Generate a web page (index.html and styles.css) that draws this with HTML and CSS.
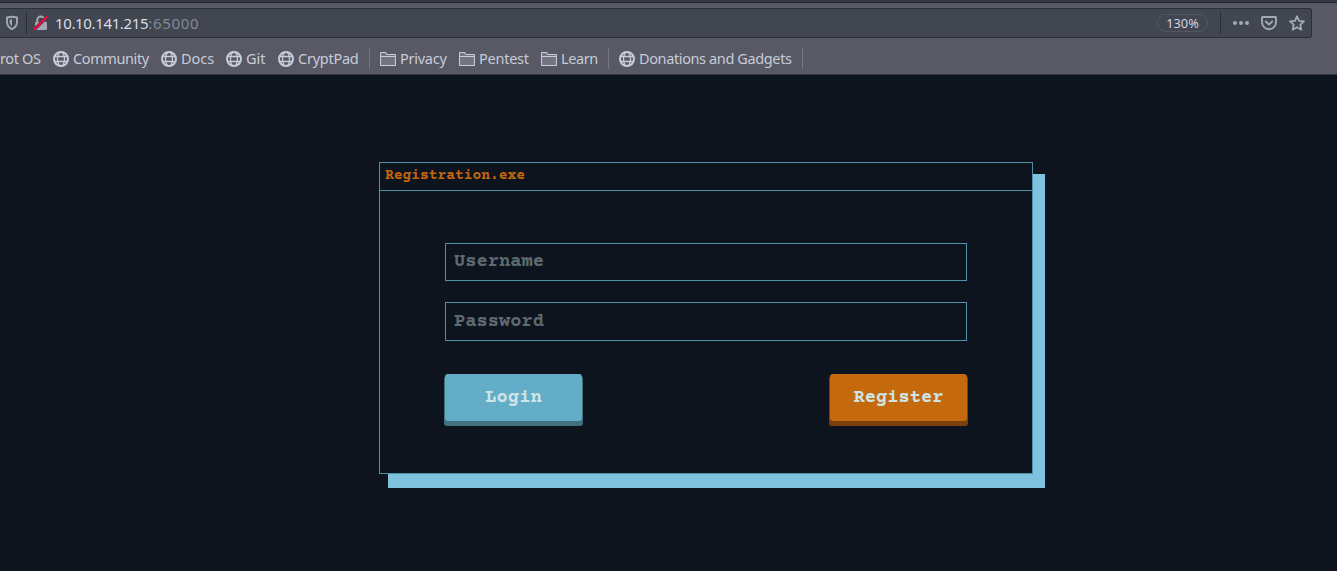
FILE: index.html
```
<!DOCTYPE html>
<html lang="en">
<head>
<meta charset="utf-8">
<title>Registration</title>
<link rel="stylesheet" href="styles.css">
</head>
<body>
<svg class="defs" aria-hidden="true">
  <symbol id="globe" viewBox="0 0 16 16"><g fill="none" stroke="currentColor"><circle cx="8" cy="8" r="7" stroke-width="2"/><ellipse cx="8" cy="8" rx="3.5" ry="7" stroke-width="1.3"/><path d="M2 5.500h12M2 10.500h12" stroke-width="1.300"/></g></symbol>
  <symbol id="folder" viewBox="0 0 16 16"><path d="M.5 14.500v-13h5l1.500 2h8.500v11z" fill="#737680"/><path d="M.5 14V2q0-.5.5-.5h4.500l1.500 2H15q.5 0 .5.500V14q0 .5-.5.500H1q-.5 0-.5-.500zM.5 5.500h15" fill="none" stroke="currentColor" stroke-width="1.100"/></symbol>
</svg>
<header class="browser">
  <div class="tabstrip"></div>
  <div class="urlbar">
    <svg class="shield" width="14" height="16" viewBox="0 0 14 16"><path d="M7 1.700c1.500 0 3.300.4 5 .8v4.300c0 3.400-2 6-5 7.300-3-1.300-5-3.900-5-7.300V2.500c1.700-.4 3.500-.8 5-.8z" fill="none" stroke="currentColor" stroke-width="1.900"/><path d="M7 4.300v6.900c-1.500-1-2.400-2.400-2.400-4.400V4.700z" fill="currentColor"/></svg>
    <span class="rule"></span>
    <svg class="lock" width="16" height="16" viewBox="0 0 16 16"><path d="M4.200 8V5.200a3.600 3.600 0 0 1 7.200 0V8" fill="none" stroke="currentColor" stroke-width="2"/><rect x="2" y="7" width="12" height="8" rx="1.300" fill="currentColor"/><path d="M1.300 14.500 13.800 2" stroke="#414651" stroke-width="3.200"/><path d="M1.300 14.200 13.800 1.700" stroke="#f5063c" stroke-width="2.200" stroke-linecap="round"/></svg>
    <span class="address">10.10.141.215<span class="port">:65000</span></span>
    <span class="zoom">130%</span>
    <span class="rule"></span>
    <svg class="dots" width="16" height="16" viewBox="0 0 16 16" fill="currentColor"><circle cx="2" cy="8" r="2"/><circle cx="8" cy="8" r="2"/><circle cx="14" cy="8" r="2"/></svg>
    <svg class="pocket" width="16" height="16" viewBox="0 0 16 16" fill="none" stroke="currentColor" stroke-linecap="round" stroke-linejoin="round" stroke-width="1.900"><path d="M1.800 2h12.400q.8 0 .8.800v4.400a7 7 0 0 1-14 0V2.800q0-.8.8-.8z"/><path d="M4.800 6.500 8 9.600l3.200-3.100"/></svg>
    <svg class="star" width="16" height="16" viewBox="0 0 16 16"><path d="m8 1.300 2 4.500 5 .5-3.700 3.400 1 5L8 12.200l-4.300 2.500 1-5L1 6.300l5-.5z" fill="none" stroke="currentColor" stroke-width="1.800" stroke-linejoin="round"/></svg>
  </div>
  <nav class="bookmarks">
    <a class="item parrot">rot OS</a>
    <a class="item community"><svg><use href="#globe"/></svg>Community</a>
    <a class="item docs"><svg><use href="#globe"/></svg>Docs</a>
    <a class="item git"><svg><use href="#globe"/></svg>Git</a>
    <a class="item cryptpad"><svg><use href="#globe"/></svg>CryptPad</a>
    <span class="divider"></span>
    <a class="item privacy"><svg><use href="#folder"/></svg>Privacy</a>
    <a class="item pentest"><svg><use href="#folder"/></svg>Pentest</a>
    <a class="item learn"><svg><use href="#folder"/></svg>Learn</a>
    <span class="divider"></span>
    <a class="item donations"><svg><use href="#globe"/></svg>Donations and Gadgets</a>
    <span class="divider"></span>
  </nav>
</header>
<main class="page">
  <section class="window">
    <h1 class="title">Registration.exe</h1>
    <form class="form">
      <input class="field" type="text" placeholder="Username">
      <input class="field password" type="password" placeholder="Password">
      <div class="actions">
        <button class="button login" type="button">Login</button>
        <button class="button register" type="button">Register</button>
      </div>
    </form>
  </section>
</main>
</body>
</html>
```
FILE: styles.css
```
* { box-sizing: border-box; }
body {
  margin: 0;
  height: 571px;
  overflow: hidden;
  background: #0d141e;
  font-family: "Noto Sans", sans-serif;
}
.defs { position: absolute; width: 0; height: 0; }
.browser {
  height: 75px;
  background: #585965;
  border-bottom: 1px solid #30343f;
  color: #c7ccd8;
  overflow: hidden;
}
.tabstrip { height: 3px; background: #353944; border-bottom: 1px solid #20242f; }
.urlbar {
  display: flex;
  align-items: center;
  width: 1312px;
  height: 30px;
  margin-top: 5px;
  padding: 0 6px 0 5px;
  background: #414651;
  border: 1px solid #292e39;
  border-left: 0;
  border-radius: 0 3px 3px 0;
  color: #a5a9b4;
}
.urlbar svg { flex: none; }
.rule { flex: none; width: 1px; height: 22px; background: #292e39; }
.shield + .rule { margin: 0 7px; }
.lock { margin-left: -1px; }
.address { margin-left: 6px; color: #d9deea; font-size: 15px; line-height: 20px; letter-spacing: -0.36px; }
.port { color: #858a96; letter-spacing: 0.7px; }
.zoom {
  width: 51px;
  height: 18px;
  margin: 0 12px 0 auto;
  border: 1px solid #535762;
  border-radius: 9px;
  color: #d0d5e1;
  font-size: 12.8px;
  line-height: 17px;
  text-align: center;
}
.dots, .pocket, .star { margin-left: 12px; }
.bookmarks { display: flex; align-items: center; height: 36px; padding-top: 5px; }
.item {
  display: flex;
  flex: none;
  align-items: center;
  gap: 4px;
  margin-top: -1px;
  font-size: 14.5px;
  line-height: 20px;
  white-space: nowrap;
}
.item svg { flex: none; width: 16px; height: 16px; margin-top: 1px; }
.parrot { width: 53px; letter-spacing: -0.35px; }
.community { width: 108px; letter-spacing: -0.4px; }
.docs { width: 65px; }
.git { width: 52px; }
.cryptpad { width: 91px; letter-spacing: -0.25px; }
.privacy { width: 79px; letter-spacing: -0.25px; }
.pentest { width: 82px; letter-spacing: -0.25px; }
.learn { width: 67px; letter-spacing: -0.4px; }
.donations { width: 183px; letter-spacing: -0.38px; }
.divider { flex: none; width: 1px; height: 21px; margin-right: 10px; background: #747782; }
.page { position: relative; z-index: 0; display: flex; padding: 87px 0 0 379px; }
.window {
  position: relative;
  width: 654px;
  height: 312px;
  border: 1px solid #4f91a8;
  background: #0d141e;
}
/* Offset slab behind the window */
.window::before {
  content: "";
  position: absolute;
  z-index: -1;
  left: 8px;
  top: 11px;
  width: 657px;
  height: 314px;
  background: #80c2de;
}
.title {
  height: 28px;
  margin: 0;
  padding-left: 5px;
  border-bottom: 1px solid #4f91a8;
  color: #c4660c;
  font: bold 14.6px/26px "Courier Prime", "Liberation Mono", monospace;
}
.form { display: flex; flex-direction: column; padding: 52px 65px 0; }
.field {
  width: 522px;
  height: 38px;
  padding: 0 8px 2px;
  border: 1px solid #4f91a8;
  border-radius: 0;
  outline: 0;
  background: transparent;
  color: #cfe4e6;
  font: bold 18.8px "Courier Prime", "Liberation Mono", monospace;
}
.field::placeholder { color: #5d6a70; opacity: 1; }
.password { height: 39px; margin-top: 21px; padding-bottom: 1px; }
.actions { display: flex; justify-content: space-between; margin: 33px -1px 0; }
.button {
  width: 137px;
  height: 47px;
  margin: 0 1px 5px;
  padding: 0;
  border: 0;
  border-radius: 3px;
  color: #cfe4e6;
  font: bold 18.8px "Courier Prime", "Liberation Mono", monospace;
  box-shadow: -1px 5px var(--edge), 1px 5px var(--edge), -1px 2px var(--edge), 1px 2px var(--edge);
}
.login { --edge: #41707f; background: #63adc8; }
.register { --edge: #7c400d; background: #c4690d; }
```
